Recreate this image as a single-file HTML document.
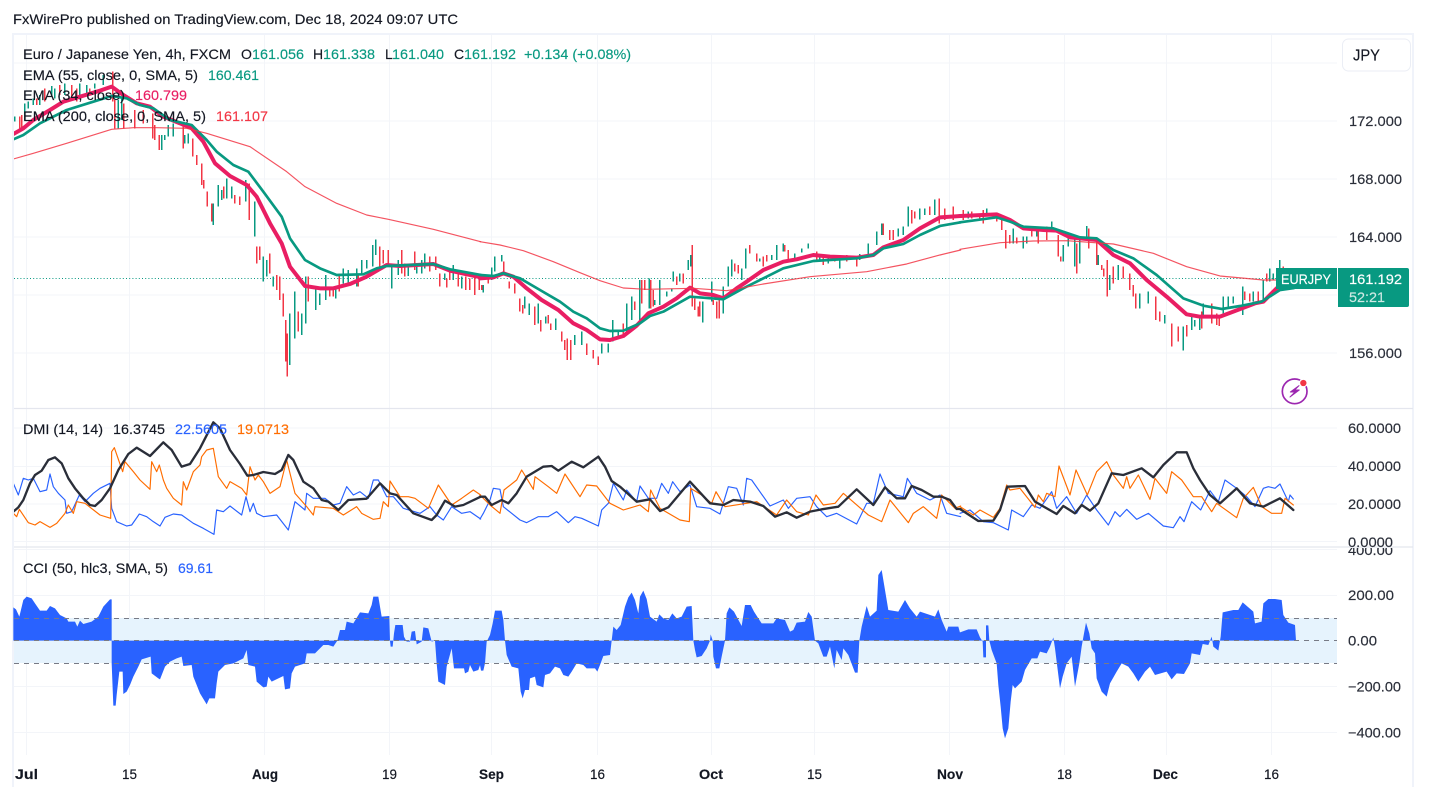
<!DOCTYPE html>
<html lang="en">
<head>
<meta charset="utf-8">
<title>EUR/JPY chart</title>
<style>
html,body{margin:0;padding:0;background:#fff;width:1438px;height:787px;overflow:hidden}
svg{display:block;font-family:"Liberation Sans",sans-serif}
text{font-size:14px;fill:#131722;stroke:#131722;stroke-width:.15px}
.g{fill:#089981;stroke:#089981}.b{fill:#2962ff;stroke:#2962ff}.o{fill:#ff6d00;stroke:#ff6d00}.p{fill:#e91e63;stroke:#e91e63}.r{fill:#f23645;stroke:#f23645}
.ax{fill:#2a2e39;stroke:#2a2e39}
.w{fill:#fff;stroke:#fff}
.z{fill:none;stroke-linejoin:round;stroke-linecap:round}
</style>
</head>
<body>
<svg width="1438" height="787" viewBox="0 0 1438 787" xmlns="http://www.w3.org/2000/svg">
<defs>
<clipPath id="cm"><rect x="14" y="35" width="1323" height="373"/></clipPath>
<clipPath id="cd"><rect x="14" y="409" width="1323" height="137"/></clipPath>
<clipPath id="c4"><rect x="1338" y="548" width="76" height="12"/></clipPath>
</defs>
<rect width="1438" height="787" fill="#fff"/>
<text x="13" y="24" textLength="445" lengthAdjust="spacingAndGlyphs">FxWirePro published on TradingView.com, Dec 18, 2024 09:07 UTC</text>

<!-- frame -->
<path d="M13 787V34H1413V787" fill="none" stroke="#f0f3fa" stroke-width="2"/>

<!-- grid -->
<path d="M14 63H1337M14 121H1337M14 179H1337M14 237H1337M14 295H1337M14 353H1337M14 428H1337M14 466.500H1337M14 504H1337M14 541.500H1337M14 549.500H1337M14 595.500H1337M14 686.500H1337M14 732.500H1337" stroke="#f3f5f9" stroke-width="1"/>
<path d="M26.500 35V755M129.500 35V755M264.500 35V755M389.500 35V755M491.500 35V755M597.500 35V755M711.500 35V755M814.500 35V755M949.500 35V755M1064.500 35V755M1166.500 35V755M1271.500 35V755" stroke="#f3f5f9" stroke-width="1"/>
<path d="M14 408.500H1413M14 547H1413" stroke="#e4e6ee" stroke-width="1.200"/>

<!-- candles -->
<g clip-path="url(#cm)">
<path d="M14 278.500H1337" stroke="#089981" stroke-width="1" stroke-dasharray="1 2.200"/>
<g fill="none" stroke-width="4.500" shape-rendering="crispEdges">
<g transform="translate(0,60) scale(.33333)">
<path stroke="#089981" d="M45 170V185M75 130V180M85 125V145M100 115V135M120 105V135M155 78V110M165 85V115M195 70V105M240 70V110M260 75V100M285 70V85M310 45V75M355 120V205M365 110V180M485 225V270M495 225V240M505 195V230M520 190V230M555 225V250M565 220V250M640 430V495M655 375V440M665 390V420M680 355V415M695 380V415M738 360V425M765 425V530M790 590V665M800 600V650M820 650V680M870 760V915M885 695V835M905 760V825M918 650V790M948 680V750M960 700V735M978 645V720M1008 680V715M1030 625V670M1045 630V675M1070 625V680M1085 600V640M1100 600V625M1118 555V620M1128 538V585M1175 610V685M1195 600V645M1225 610V648M1250 610V640M1265 600V640M1275 580V625M1335 640V660M1360 615V660M1385 650V685"/>
<path stroke="#f23645" d="M60 170V205M65 165V205M110 115V135M135 85V125M180 75V105M215 75V115M230 85V125M270 85V100M338 35V125M345 120V205M372 130V205M405 150V205M430 150V190M458 160V235M465 195V240M478 225V270M550 200V265M578 235V290M590 285V315M605 310V375M612 360V385M622 395V440M635 430V485M672 380V415M705 405V430M720 410V435M748 370V480M770 560V610M780 560V600M810 580V640M830 645V690M840 650V720M850 700V770M858 780V905M862 820V950M895 755V815M925 650V725M990 680V710M1000 680V710M1018 640V695M1075 640V680M1140 560V620M1150 570V610M1165 570V615M1205 570V640M1215 610V650M1245 575V630M1290 590V635M1308 590V630M1320 640V680M1340 655V682M1350 630V660M1375 640V680M1397 650V690M1410 655V690M1425 650V705M1438 650V690"/>
</g>
<g transform="translate(480,160) scale(.33333)">
<path stroke="#089981" d="M10 375V398M35 322V360M45 290V335M65 285V305M135 410V445M148 430V465M175 430V490M197 470V490M228 475V510M285 525V555M305 515V555M365 550V580M385 550V578M398 480V545M415 510V530M440 430V515M455 410V480M480 360V480M508 355V445M525 420V435M540 360V435M560 395V410M575 385V395M580 335V365M600 340V365M625 300V330M632 285V320M668 425V488M695 365V425M730 380V460M745 320V380M755 298V350M785 325V360M798 265V325M840 295V305M875 285V300M890 255V300M910 250V275M945 280V300M965 265V278M985 250V265M1020 285V300M1045 285V310M1080 295V325M1140 282V300M1165 250V285M1190 215V255M1205 190V225M1255 205V230M1270 200V225M1285 140V200M1320 145V178M1335 145V165M1365 118V165"/>
<path stroke="#f23645" d="M5 375V390M25 345V370M72 305V340M88 365V385M105 370V400M120 415V455M128 435V460M165 440V495M182 480V515M205 465V490M212 490V510M245 515V545M255 540V570M262 535V600M273 540V600M320 550V585M340 570V595M355 590V615M430 490V530M465 425V450M485 360V430M495 360V390M512 360V445M520 390V440M590 350V375M610 340V370M637 255V440M645 415V450M655 440V470M660 425V470M700 420V435M710 425V475M718 405V475M765 310V335M775 315V340M810 255V280M830 280V305M850 290V320M860 285V305M915 255V275M925 270V305M1010 275V300M1030 290V315M1065 285V305M1100 285V305M1130 290V320M1210 190V225M1230 210V240M1240 210V240M1295 150V190M1305 155V175M1350 140V165M1378 115V190M1395 145V180M1420 140V180"/>
</g>
<g transform="translate(900,160) scale(.33333)">
<path stroke="#089981" d="M205 155V175M260 145V170M300 165V178M340 205V250M370 230V265M380 230V250M410 200V230M455 185V215M490 255V305M505 230V260M525 230V320M540 240V310M560 198V240M595 285V315M630 345V390M655 315V360M720 400V445M745 395V430M795 465V490M850 500V572M875 470V510M885 480V500M900 470V510M910 430V470M970 410V460M985 410V440M1000 410V430M1028 380V465M1060 395V425M1090 360V420M1110 325V365M1120 340V360M1140 300V335"/>
<path stroke="#f23645" d="M190 150V180M215 155V175M240 160V175M250 150V190M290 160V185M305 180V210M318 210V265M330 225V250M350 232V250M395 205V230M415 210V250M440 200V240M475 225V290M482 290V305M530 250V340M567 205V265M590 240V315M605 315V330M612 325V350M622 300V410M640 320V370M670 320V355M690 340V390M700 375V410M708 400V445M767 410V480M780 455V485M815 490V560M835 500V545M860 495V530M905 455V505M935 430V490M950 460V495M958 465V498M1035 395V420M1050 400V425M1075 395V430M1100 340V365M1130 325V350M1150 320V330"/>
</g>
</g>

<!-- moving averages -->
<g class="z" transform="translate(0,60) scale(.33333)">
<polyline stroke="#e91e63" stroke-width="12" points="40,222 70,205 100,180 150,150 190,125 240,110 300,92 335,80 370,105 410,130 450,140 490,170 540,190 575,205 610,245 645,310 690,348 740,375 770,410 810,490 845,550 870,620 915,678 960,685 1000,685 1050,672 1100,650 1160,615 1200,618 1300,612 1350,632 1442,652"/>
<polyline stroke="#089981" stroke-width="8" points="40,238 70,225 120,190 200,150 280,125 335,108 380,115 420,135 460,145 510,180 575,195 620,240 650,275 700,315 745,335 790,395 845,470 870,535 915,600 960,625 1010,645 1090,643 1130,625 1160,618 1300,612 1350,628 1442,645"/>
<polyline stroke="#f23645" stroke-width="3.500" stroke-opacity=".85" points="40,297 100,280 200,250 335,208 400,203 470,203 560,205 620,220 750,260 860,335 915,380 1010,430 1100,465 1165,478 1300,508 1442,545"/>
</g>
<g class="z" transform="translate(480,160) scale(.33333)">
<polyline stroke="#e91e63" stroke-width="12" points="0,355 40,352 70,340 100,350 140,385 185,420 235,450 280,490 320,510 360,538 390,540 430,528 470,497 505,460 550,440 590,415 630,383 660,400 700,405 730,415 770,385 800,365 850,330 910,305 950,298 1000,285 1050,290 1130,293 1180,285 1210,262 1270,240 1320,205 1380,172 1442,168"/>
<polyline stroke="#089981" stroke-width="8" points="0,345 40,348 70,340 120,355 180,390 240,425 280,455 320,475 360,505 390,513 430,512 480,490 510,468 550,455 630,410 670,413 730,418 790,385 860,350 910,325 1000,303 1130,295 1180,285 1210,265 1270,252 1320,225 1380,198 1442,187"/>
<polyline stroke="#f23645" stroke-width="3.500" stroke-opacity=".85" points="0,245 60,255 130,272 220,305 300,338 360,362 430,384 500,388 640,385 740,392 850,372 990,350 1160,335 1280,312 1380,285 1442,270"/>
</g>
<g class="z" transform="translate(900,160) scale(.33333)">
<polyline stroke="#e91e63" stroke-width="12" points="180,168 290,163 330,180 370,205 430,210 470,212 510,232 590,240 640,285 690,310 740,360 800,410 860,463 900,470 960,470 1000,455 1065,430 1090,425 1130,385 1160,370"/>
<polyline stroke="#089981" stroke-width="8" points="180,187 290,172 330,185 370,200 460,205 510,222 540,232 590,235 640,270 700,295 770,345 850,415 910,437 965,447 1020,438 1085,425 1140,390 1182,384"/>
<polyline stroke="#f23645" stroke-width="3.500" stroke-opacity=".85" points="180,268 300,248 400,243 500,242 640,252 760,280 860,320 960,348 1090,360 1130,360"/>
</g>
</g>

<!-- DMI -->
<g clip-path="url(#cd)">
<g class="z" transform="translate(0,400) scale(.33333)">
<polyline stroke="#2962ff" stroke-width="3.500" points="40,250 55,285 70,235 85,240 100,235 120,275 140,270 150,222 160,260 175,280 195,300 200,340 215,335 238,285 255,305 280,280 300,265 330,250 335,325 350,365 380,378 395,375 418,342 440,350 460,365 480,378 495,352 520,342 545,345 580,370 610,385 642,403 650,330 670,335 690,318 725,345 738,290 750,335 760,310 770,340 790,350 830,345 865,390 885,305 915,330 920,280 940,295 975,295 1000,315 1020,310 1040,260 1060,285 1080,275 1105,295 1120,240 1135,240 1160,290 1180,290 1210,325 1260,340 1290,320 1310,345 1330,360 1355,320 1385,340 1410,335 1442,357"/>
<polyline stroke="#ff6d00" stroke-width="3.500" points="40,340 50,350 58,328 85,368 105,375 120,365 150,382 170,370 195,340 205,315 220,340 230,305 255,310 300,345 332,355 335,155 343,143 368,215 375,185 400,215 420,240 450,268 455,185 470,215 478,195 490,240 500,265 520,295 545,315 550,245 560,270 580,215 600,195 605,170 620,150 640,145 655,230 680,265 690,245 725,265 740,285 750,200 765,240 775,225 790,245 810,280 840,260 860,180 885,280 920,320 940,345 945,320 1000,325 1030,345 1070,320 1085,340 1120,358 1140,355 1150,305 1165,320 1170,243 1200,290 1225,290 1245,295 1285,325 1315,255 1355,315 1385,295 1420,270 1442,285"/>
<polyline stroke="#2a2e39" stroke-width="7" points="40,335 55,322 70,300 90,250 105,225 125,212 145,180 165,172 185,190 205,235 225,265 250,295 270,315 285,318 305,300 330,265 355,210 385,162 410,143 450,168 490,127 515,150 545,200 570,192 600,145 640,67 660,85 690,150 720,192 742,227 760,225 790,216 825,222 845,210 865,165 880,180 910,245 940,265 965,300 985,305 1015,330 1045,300 1100,296 1140,250 1170,280 1190,285 1240,340 1295,360 1310,345 1335,302 1365,320 1390,315 1442,290"/>
</g>
<g class="z" transform="translate(480,400) scale(.33333)">
<polyline stroke="#2962ff" stroke-width="3.500" points="0,357 10,340 30,300 40,265 60,268 70,320 95,340 120,360 140,368 175,350 205,350 230,335 265,368 285,350 305,355 355,378 365,330 385,310 400,250 430,300 440,270 470,305 480,258 505,295 530,295 545,250 565,280 578,245 600,275 630,255 650,320 690,325 720,342 745,260 770,265 790,315 800,235 815,240 870,318 910,300 925,325 950,295 990,290 1010,320 1040,350 1070,340 1130,372 1160,310 1180,310 1200,222 1225,280 1270,290 1282,235 1310,280 1350,300 1380,285 1400,340 1442,350"/>
<polyline stroke="#ff6d00" stroke-width="3.500" points="0,285 30,315 60,340 72,270 110,240 125,210 160,268 165,230 205,260 230,280 255,222 300,290 320,255 350,258 390,310 430,330 480,315 505,335 512,270 540,325 600,360 628,365 632,265 665,285 695,310 708,275 735,320 800,310 830,305 890,345 920,300 950,335 985,345 1008,285 1030,315 1065,310 1090,280 1165,345 1205,365 1230,300 1285,368 1300,340 1330,320 1370,355 1385,285 1425,325 1442,318"/>
<polyline stroke="#2a2e39" stroke-width="7" points="0,290 15,290 35,315 65,300 85,310 110,280 140,230 190,200 215,198 235,212 275,185 310,202 355,170 375,200 395,243 420,260 470,305 510,298 540,333 565,322 630,245 690,310 730,315 760,300 810,305 850,318 885,350 920,337 950,353 990,335 1025,328 1075,320 1130,268 1180,315 1215,262 1250,295 1275,295 1295,258 1325,270 1360,290 1385,290 1410,300 1430,327 1442,327"/>
</g>
<g class="z" transform="translate(960,400) scale(.33333)">
<polyline stroke="#2962ff" stroke-width="3.500" points="0,340 30,330 70,365 100,368 145,390 155,330 190,350 215,315 240,325 275,275 290,325 320,290 350,340 380,285 410,330 445,375 465,335 480,350 500,328 530,358 565,340 610,378 640,383 660,350 672,365 695,305 722,330 750,272 775,305 795,240 830,265 860,290 885,320 910,265 925,260 945,265 960,252 985,305 990,285 1000,297"/>
<polyline stroke="#ff6d00" stroke-width="3.500" points="0,320 40,345 60,330 100,352 120,325 140,255 150,270 180,265 225,322 235,285 250,305 260,280 285,290 297,198 330,285 348,210 382,285 410,215 440,185 460,225 490,265 500,230 510,265 535,225 570,298 585,235 620,280 635,215 665,240 700,290 725,290 755,335 770,310 830,353 850,295 880,262 905,320 935,340 965,340 975,295 1000,315"/>
<polyline stroke="#2a2e39" stroke-width="7" points="0,327 55,363 100,362 120,330 142,260 195,258 225,305 290,342 310,318 345,340 365,315 390,332 415,310 455,220 490,225 545,205 580,232 610,195 650,157 680,157 700,205 720,240 750,285 780,310 830,265 870,310 910,320 960,295 1000,330"/>
</g>
</g>

<!-- CCI -->
<rect x="14" y="618" width="1323" height="45" fill="#e6f3fd"/>
<g fill="#2962ff">
<polygon transform="translate(0,400) scale(.33333)" points="40,722 40,622 48,628 58,650 70,600 80,590 95,595 105,610 120,632 140,632 150,618 165,625 180,645 200,655 205,665 225,665 232,680 240,662 250,672 275,665 295,650 310,620 330,598 335,598 335,790 340,917 347,917 350,885 358,815 368,815 370,882 380,875 390,855 400,830 415,800 425,778 452,770 455,820 475,835 480,838 495,800 510,785 530,775 545,770 550,798 575,795 580,830 600,880 620,913 628,895 645,895 650,850 655,815 675,795 700,790 730,775 740,750 745,795 765,800 770,845 790,862 800,860 805,830 815,845 850,828 855,868 870,865 875,820 885,800 915,790 920,760 945,760 970,735 985,735 1000,740 1012,722 1020,690 1035,690 1040,665 1060,670 1080,637 1105,640 1115,615 1120,590 1135,590 1145,650 1168,648 1170,722 1172,740 1178,740 1182,700 1186,675 1208,675 1212,710 1220,725 1230,725 1235,695 1245,693 1250,733 1265,725 1270,682 1285,685 1295,725 1305,722 1310,790 1315,845 1335,855 1340,800 1355,745 1362,805 1392,805 1395,820 1405,815 1410,795 1420,815 1435,810 1442,790 1442,722"/>
<polygon transform="translate(480,400) scale(.33333)" points="0,722 0,795 3,812 10,812 15,790 20,725 30,705 38,670 45,632 65,632 70,660 75,722 80,765 95,800 115,805 118,835 122,875 128,895 135,870 147,870 150,835 165,830 170,855 190,862 195,825 210,820 225,800 240,805 250,825 265,830 275,815 290,790 310,795 320,805 345,805 352,815 360,795 370,768 390,765 395,722 400,680 410,690 422,675 435,620 445,592 455,578 465,600 475,640 480,590 490,572 500,597 510,650 530,665 538,643 550,655 565,660 577,640 590,655 605,650 620,620 635,618 640,722 645,750 650,772 665,768 680,745 690,722 692,703 698,722 700,770 708,805 718,805 725,770 735,722 740,640 748,622 762,635 770,650 785,678 795,615 812,615 822,635 835,655 845,670 880,670 890,655 915,660 930,695 940,690 950,668 975,665 985,636 995,650 1005,722 1015,730 1030,770 1040,770 1050,740 1063,805 1070,750 1085,780 1090,745 1105,765 1125,818 1133,818 1138,722 1145,680 1160,618 1170,650 1190,632 1195,525 1205,510 1215,570 1225,630 1255,635 1275,600 1290,625 1310,650 1320,635 1365,650 1375,628 1385,660 1400,695 1405,680 1435,680 1442,705 1442,722"/>
<polygon transform="translate(960,400) scale(.33333)" points="0,722 0,697 25,688 50,688 60,712 68,725 70,772 78,772 78,676 85,676 88,722 95,750 110,790 115,855 122,920 128,985 135,1015 145,985 152,905 158,855 165,865 185,845 195,810 215,775 232,775 240,755 260,760 270,740 280,712 285,745 295,825 300,865 308,830 320,790 335,770 345,860 358,790 365,740 372,700 378,668 388,700 395,745 405,760 410,835 425,875 440,890 450,850 470,815 485,790 505,800 520,820 535,845 555,815 570,800 585,825 620,815 635,838 650,820 672,822 690,790 695,760 720,765 728,732 745,735 755,710 760,740 775,752 782,710 788,637 820,630 835,630 848,607 880,635 885,670 905,665 910,610 925,597 945,597 965,600 970,645 985,668 1005,675 1008,722"/>
</g>
<path d="M14 618.500H1337M14 663.500H1337M14 640.500H1337" stroke="#787b86" stroke-width="1" stroke-dasharray="5 5" fill="none"/>

<!-- legend -->
<text x="23" y="59" textLength="208" lengthAdjust="spacingAndGlyphs">Euro / Japanese Yen, 4h, FXCM</text>
<text x="241" y="59">O</text><text class="g" x="252" y="59" textLength="52" lengthAdjust="spacingAndGlyphs">161.056</text>
<text x="313" y="59">H</text><text class="g" x="323" y="59" textLength="52" lengthAdjust="spacingAndGlyphs">161.338</text>
<text x="385" y="59">L</text><text class="g" x="392" y="59" textLength="52" lengthAdjust="spacingAndGlyphs">161.040</text>
<text x="454" y="59">C</text><text class="g" x="464" y="59" textLength="52" lengthAdjust="spacingAndGlyphs">161.192</text>
<text class="g" x="524" y="59" textLength="107" lengthAdjust="spacingAndGlyphs">+0.134 (+0.08%)</text>

<text x="23" y="80" textLength="175" lengthAdjust="spacingAndGlyphs">EMA (55, close, 0, SMA, 5)</text>
<text class="g" x="208" y="80" textLength="51" lengthAdjust="spacingAndGlyphs">160.461</text>
<text x="23" y="100" textLength="102" lengthAdjust="spacingAndGlyphs">EMA (34, close)</text>
<text class="p" x="135" y="100" textLength="52" lengthAdjust="spacingAndGlyphs">160.799</text>
<text x="23" y="121" textLength="183" lengthAdjust="spacingAndGlyphs">EMA (200, close, 0, SMA, 5)</text>
<text class="r" x="216" y="121" textLength="52" lengthAdjust="spacingAndGlyphs">161.107</text>

<text x="23" y="434" textLength="80" lengthAdjust="spacingAndGlyphs">DMI (14, 14)</text>
<text x="113" y="434" textLength="52" lengthAdjust="spacingAndGlyphs">16.3745</text>
<text class="b" x="175" y="434" textLength="52" lengthAdjust="spacingAndGlyphs">22.5605</text>
<text class="o" x="237" y="434" textLength="52" lengthAdjust="spacingAndGlyphs">19.0713</text>

<text x="23" y="573" textLength="145" lengthAdjust="spacingAndGlyphs">CCI (50, hlc3, SMA, 5)</text>
<text class="b" x="178" y="573" textLength="35" lengthAdjust="spacingAndGlyphs">69.61</text>

<!-- JPY -->
<rect x="1342.500" y="39" width="68" height="32" rx="6" fill="#fff" stroke="#ebeef5" stroke-width="1"/>
<text x="1353" y="60.500" style="font-size:16px" textLength="27" lengthAdjust="spacingAndGlyphs">JPY</text>

<!-- price axis -->
<g>
<text class="ax" x="1349" y="126" textLength="53" lengthAdjust="spacingAndGlyphs">172.000</text>
<text class="ax" x="1349" y="184" textLength="53" lengthAdjust="spacingAndGlyphs">168.000</text>
<text class="ax" x="1349" y="242" textLength="53" lengthAdjust="spacingAndGlyphs">164.000</text>
<text class="ax" x="1349" y="358" textLength="53" lengthAdjust="spacingAndGlyphs">156.000</text>
<text class="ax" x="1348" y="433" textLength="53" lengthAdjust="spacingAndGlyphs">60.0000</text>
<text class="ax" x="1348" y="471" textLength="53" lengthAdjust="spacingAndGlyphs">40.0000</text>
<text class="ax" x="1348" y="509" textLength="53" lengthAdjust="spacingAndGlyphs">20.0000</text>
<text class="ax" x="1348" y="547" textLength="45" lengthAdjust="spacingAndGlyphs">0.0000</text>
<text class="ax" x="1348" y="555" textLength="45" lengthAdjust="spacingAndGlyphs" clip-path="url(#c4)">400.00</text>
<text class="ax" x="1348" y="600" textLength="46" lengthAdjust="spacingAndGlyphs">200.00</text>
<text class="ax" x="1348" y="645.500" textLength="29" lengthAdjust="spacingAndGlyphs">0.00</text>
<text class="ax" x="1348" y="691.500" textLength="53" lengthAdjust="spacingAndGlyphs">−200.00</text>
<text class="ax" x="1348" y="737.500" textLength="53" lengthAdjust="spacingAndGlyphs">−400.00</text>
</g>

<!-- price tags -->
<rect x="1276" y="268" width="61" height="21" fill="#089981"/>
<text class="w" x="1281" y="284" textLength="50" lengthAdjust="spacingAndGlyphs">EURJPY</text>
<path d="M1338 268H1407a2 2 0 0 1 2 2V305a2 2 0 0 1-2 2H1338Z" fill="#089981"/>
<text class="w" x="1349" y="284" textLength="53" lengthAdjust="spacingAndGlyphs">161.192</text>
<text x="1349" y="302" style="fill:#cfe9e4;stroke:#cfe9e4" textLength="36" lengthAdjust="spacingAndGlyphs">52:21</text>

<!-- flash icon -->
<g transform="translate(1200,20) scale(.33333)">
<circle cx="284" cy="1114" r="37" fill="#fff" stroke="#9c27b0" stroke-width="5"/>
<path d="M297 1097L271 1116H285L270 1131L298 1110H284Z" fill="#9c27b0" stroke="#9c27b0" stroke-width="3" stroke-linejoin="round"/>
<circle cx="310" cy="1089" r="13" fill="#fff"/>
<circle cx="310" cy="1089" r="9.500" fill="#f23645"/>
</g>

<!-- time axis -->
<g>
<text x="15" y="779" font-weight="bold" textLength="23" lengthAdjust="spacingAndGlyphs">Jul</text>
<text x="122" y="779" textLength="15" lengthAdjust="spacingAndGlyphs">15</text>
<text x="252" y="779" font-weight="bold" textLength="26" lengthAdjust="spacingAndGlyphs">Aug</text>
<text x="382" y="779" textLength="15" lengthAdjust="spacingAndGlyphs">19</text>
<text x="479" y="779" font-weight="bold" textLength="25" lengthAdjust="spacingAndGlyphs">Sep</text>
<text x="590" y="779" textLength="15" lengthAdjust="spacingAndGlyphs">16</text>
<text x="699" y="779" font-weight="bold" textLength="24" lengthAdjust="spacingAndGlyphs">Oct</text>
<text x="807" y="779" textLength="15" lengthAdjust="spacingAndGlyphs">15</text>
<text x="937" y="779" font-weight="bold" textLength="26" lengthAdjust="spacingAndGlyphs">Nov</text>
<text x="1057" y="779" textLength="15" lengthAdjust="spacingAndGlyphs">18</text>
<text x="1153" y="779" font-weight="bold" textLength="25" lengthAdjust="spacingAndGlyphs">Dec</text>
<text x="1264" y="779" textLength="15" lengthAdjust="spacingAndGlyphs">16</text>
</g>
</svg>
</body>
</html>
